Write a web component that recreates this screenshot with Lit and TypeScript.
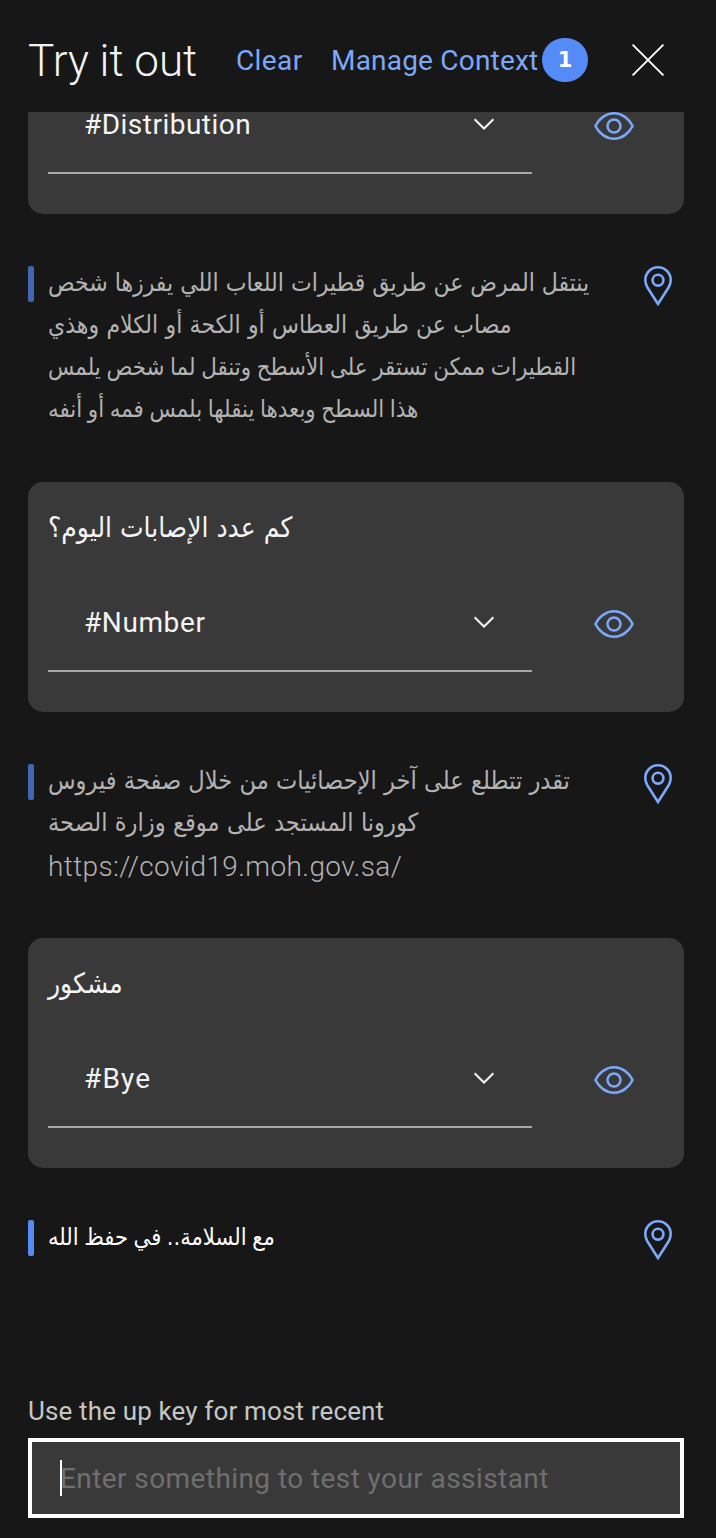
import { LitElement, html, css, svg } from "lit";
import { customElement } from "lit/decorators.js";

type Line = { text: string; gap?: number; size?: number; url?: boolean };
type Turn = { said: string; intent: string; track: number; reply: Line[]; tail: string; past: boolean };

const turns: Turn[] = [
  {
    said: "",
    intent: "#Distribution",
    track: 0.48,
    past: true,
    tail: "long",
    reply: [
      { text: "ينتقل المرض عن طريق قطيرات اللعاب اللي يفرزها شخص", size: 24.5 },
      { text: "مصاب عن طريق العطاس أو الكحة أو الكلام وهذي", size: 24.5, gap: 0.3 },
      { text: "القطيرات ممكن تستقر على الأسطح وتنقل لما شخص يلمس", size: 23.8, gap: -1.1 },
      { text: "هذا السطح وبعدها ينقلها بلمس فمه أو أنفه", size: 23.8, gap: -1.2 },
    ],
  },
  {
    said: "كم عدد الإصابات اليوم؟",
    intent: "#Number",
    track: 0.6,
    past: true,
    tail: "mid",
    reply: [
      { text: "تقدر تتطلع على آخر الإحصائيات من خلال صفحة فيروس", size: 25.1, gap: 0.1 },
      { text: "كورونا المستجد على موقع وزارة الصحة", size: 25.1, gap: 0.2 },
      { text: "https://covid19.moh.gov.sa/", size: 28, url: true },
    ],
  },
  {
    said: "مشكور",
    intent: "#Bye",
    track: 1.2,
    past: false,
    tail: "end",
    reply: [{ text: "مع السلامة.. في حفظ الله", size: 23.5, gap: -1.2 }],
  },
];

const closeIcon = svg`<svg class="close" width="34" height="34" viewBox="0 0 34 34" fill="none" stroke="#fff" stroke-width="1.9"><path d="M1.6 1.6 32.4 32.4M32.4 1.6 1.6 32.4"/></svg>`;
const chevron = svg`<svg class="chevron" width="22" height="12" viewBox="0 0 22 12" fill="none" stroke="#f4f4f4" stroke-width="2"><path d="M1.6 1.2 11 10.5 20.4 1.2"/></svg>`;
const eye = svg`<svg class="eye" width="40" height="28" viewBox="0 0 40 28" fill="none" stroke="#7ba8fb" stroke-width="2.5"><path d="M1.4 14C5 6.600 12 1.300 20 1.300S35 6.600 38.600 14C35 21.400 28 26.700 20 26.700S5 21.400 1.400 14Z"/><circle cx="20" cy="14" r="6.500"/></svg>`;
const pin = svg`<svg class="pin" width="28" height="40" viewBox="0 0 28 40" fill="none" stroke="#7ba8fb" stroke-width="2.6"><path d="M14 38 3.300 21.200C1.900 18.900 1.300 16.700 1.300 14A12.700 12.700 0 0 1 26.700 14C26.700 16.700 26.100 18.900 24.700 21.200Z"/><circle cx="14" cy="14.200" r="5.400"/></svg>`;

@customElement("app-root")
class AppRoot extends LitElement {
  static styles = css`
    :host {
      display: flex;
      flex-direction: column;
      height: 1538px;
      overflow: hidden;
      background: #171717;
      color: #f4f4f4;
      font: 28px/36px Roboto, "Liberation Sans", sans-serif;
      font-weight: 400;
    }
    svg { display: block; flex: none; }
    header {
      flex: none;
      display: flex;
      align-items: center;
      box-sizing: border-box;
      height: 112px;
      padding: 8px 51px 0 28px;
      white-space: nowrap;
    }
    h1 { margin: 2px 0 0; width: 208px; font-size: 44px; line-height: 52px; font-weight: 300; }
    .link { color: #7ba8fb; margin-top: 1px; }
    .clear { width: 95px; letter-spacing: 0.4px; }
    .manage { width: 211px; letter-spacing: 0.2px; }
    .badge {
      width: 46px;
      height: 44px;
      border-radius: 22px;
      background: #548bf7;
      color: #fff;
      text-align: center;
      font: bold 21px/44px "DejaVu Sans", sans-serif;
    }
    .close { margin-left: 43px; }
    main { flex: 1; min-height: 0; overflow: hidden; padding: 0 32px 0 28px; }
    .card {
      box-sizing: border-box;
      height: 230px;
      padding: 24px 20px 0;
      border-radius: 15px;
      background: #393939;
    }
    .turn:first-child .card { margin-top: -128px; }
    .said {
      box-sizing: border-box;
      height: 76px;
      padding-top: 2px;
      line-height: 40px;
      font-family: "DejaVu Sans Condensed", "DejaVu Sans", sans-serif;
      font-stretch: condensed;
      font-size: 27.9px;
      white-space: nowrap;
    }
    .row { display: flex; align-items: flex-start; }
    .select {
      display: flex;
      align-items: center;
      box-sizing: border-box;
      width: 484px;
      height: 90px;
      padding: 0 37px 8px 36px;
      border-bottom: 2px solid #a8a8a8;
    }
    .intent { flex: 1; padding-top: 2px; }
    .eye { margin: 28px 0 0 62px; }
    .reply { display: flex; padding-top: 52px; box-sizing: border-box; }
    .long { height: 268px; }
    .mid { height: 226px; }
    .end { height: 120px; }
    .bar { width: 6px; height: 36px; border-radius: 2px; background: #548bf7; flex: none; }
    .lines { flex: 1; margin: -4px 0 0 14px; color: #fff; }
    .past .bar { background: #4167b3; }
    .past .lines { color: #b3b3b3; }
    .line {
      height: 42px;
      line-height: 42px;
      white-space: nowrap;
      font-family: "DejaVu Sans Condensed", "DejaVu Sans", sans-serif;
      font-stretch: condensed;
    }
    .url {
      padding-top: 2px;
      font-family: Roboto, sans-serif;
      font-stretch: normal;
      font-weight: 300;
      letter-spacing: 0.38px;
    }
    .pin { margin-right: 12px; }
    footer { flex: none; padding: 0 32px 20px 28px; }
    label { display: block; height: 45px; color: #c6c6c6; font-size: 26px; letter-spacing: 0.14px; }
    .field {
      display: flex;
      align-items: center;
      box-sizing: border-box;
      height: 80px;
      padding-left: 28px;
      border: 4px solid #fff;
      background: #393939;
      color: #6f6f6f;
      letter-spacing: 0.42px;
    }
    .field span:last-child { padding-top: 2px; }
    .caret { width: 2px; height: 36px; margin-right: -2px; background: #fff; }
  `;

  private turn(t: Turn) {
    return html`<section class="turn ${t.past ? "past" : ""}">
      <div class="card">
        <div class="said">${t.said}</div>
        <div class="row">
          <div class="select">
            <span class="intent" style="letter-spacing:${t.track}px">${t.intent}</span>${chevron}
          </div>
          ${eye}
        </div>
      </div>
      <div class="reply ${t.tail}">
        <div class="bar"></div>
        <div class="lines">
          ${t.reply.map((l) => html`<div class="line ${l.url ? "url" : ""}" style="font-size:${l.size}px;word-spacing:${l.gap ?? 0}px">${l.text}</div>`)}
        </div>
        ${pin}
      </div>
    </section>`;
  }

  render() {
    return html`
      <header>
        <h1>Try it out</h1>
        <span class="link clear">Clear</span>
        <span class="link manage">Manage Context</span>
        <span class="badge">1</span>
        ${closeIcon}
      </header>
      <main>${turns.map((t) => this.turn(t))}</main>
      <footer>
        <label>Use the up key for most recent</label>
        <div class="field"><span class="caret"></span><span>Enter something to test your assistant</span></div>
      </footer>
    `;
  }
}
